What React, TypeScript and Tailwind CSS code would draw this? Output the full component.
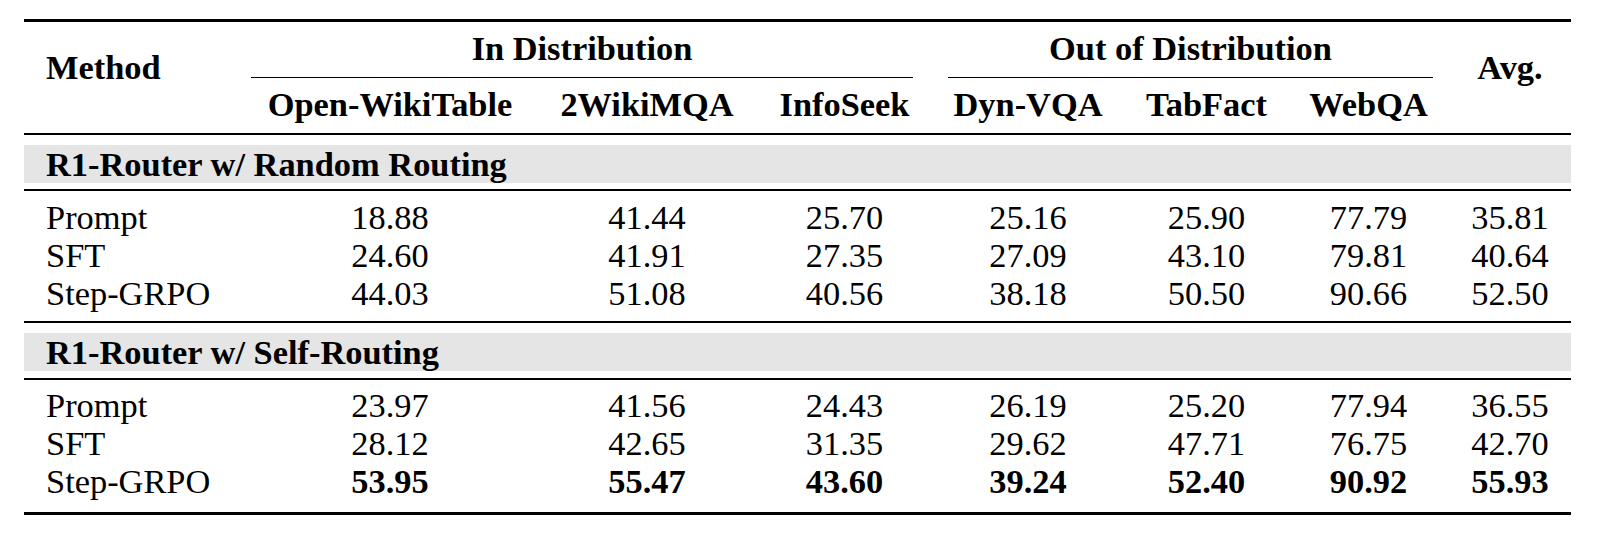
import React from 'react';

const cols = 'grid grid-cols-[220px_292px_222px_173px_194px_163px_161px_122px]';

type Row = { method: string; values: string[]; bold?: boolean };

const sections: { title: string; rows: Row[] }[] = [
  {
    title: 'R1-Router w/ Random Routing',
    rows: [
      { method: 'Prompt', values: ['18.88', '41.44', '25.70', '25.16', '25.90', '77.79', '35.81'] },
      { method: 'SFT', values: ['24.60', '41.91', '27.35', '27.09', '43.10', '79.81', '40.64'] },
      { method: 'Step-GRPO', values: ['44.03', '51.08', '40.56', '38.18', '50.50', '90.66', '52.50'] },
    ],
  },
  {
    title: 'R1-Router w/ Self-Routing',
    rows: [
      { method: 'Prompt', values: ['23.97', '41.56', '24.43', '26.19', '25.20', '77.94', '36.55'] },
      { method: 'SFT', values: ['28.12', '42.65', '31.35', '29.62', '47.71', '76.75', '42.70'] },
      { method: 'Step-GRPO', values: ['53.95', '55.47', '43.60', '39.24', '52.40', '90.92', '55.93'], bold: true },
    ],
  },
];

const subHeaders = ['Open-WikiTable', '2WikiMQA', 'InfoSeek', 'Dyn-VQA', 'TabFact', 'WebQA'];

const App = () => {
  return (
    <div className="w-[1620px] h-[536px] bg-white text-black font-['Liberation_Serif',serif] text-[34.4px] leading-[38px]">
      <div className="ml-[24px] w-[1547px] pt-[19px]">
        <div className="h-[3px] bg-black" />

        <div className={cols}>
          <div className="row-span-2 pt-[26px] pl-[22px] font-bold">Method</div>
          <div className="col-span-3 ml-[7px] mr-[18px] flex flex-col">
            <div className="pt-[7px] pb-[10px] text-center font-bold whitespace-nowrap">In Distribution</div>
            <div className="h-px bg-black" />
          </div>
          <div className="col-span-3 ml-[17px] mr-[16px] flex flex-col">
            <div className="pt-[7px] pb-[10px] text-center font-bold whitespace-nowrap">Out of Distribution</div>
            <div className="h-px bg-black" />
          </div>
          <div className="row-span-2 pt-[26px] text-center font-bold">Avg.</div>
          {subHeaders.map((h) => (
            <div key={h} className="pt-[7px] pb-[10px] text-center font-bold whitespace-nowrap">
              {h}
            </div>
          ))}
        </div>

        {sections.map((section, i) => (
          <div key={section.title}>
            <div className="h-[2px] bg-black" />
            <div className={i === 0 ? 'mt-[10px] mb-[6px]' : 'mt-[10px] mb-[7px]'}>
              <div className="bg-[#e5e5e5] pl-[22px] font-bold whitespace-nowrap">{section.title}</div>
            </div>
            <div className="h-[2px] bg-black" />
            <div className={i === 0 ? 'pt-[7px] pb-[9px]' : 'pt-[6px] pb-[12px]'}>
              {section.rows.map((row) => (
                <div key={row.method} className={cols}>
                  <div className="pl-[22px] whitespace-nowrap">{row.method}</div>
                  {row.values.map((v, j) => (
                    <div key={j} className={row.bold ? 'text-center font-bold' : 'text-center'}>
                      {v}
                    </div>
                  ))}
                </div>
              ))}
            </div>
          </div>
        ))}

        <div className="h-[3px] bg-black" />
      </div>
    </div>
  );
};

export default App;
